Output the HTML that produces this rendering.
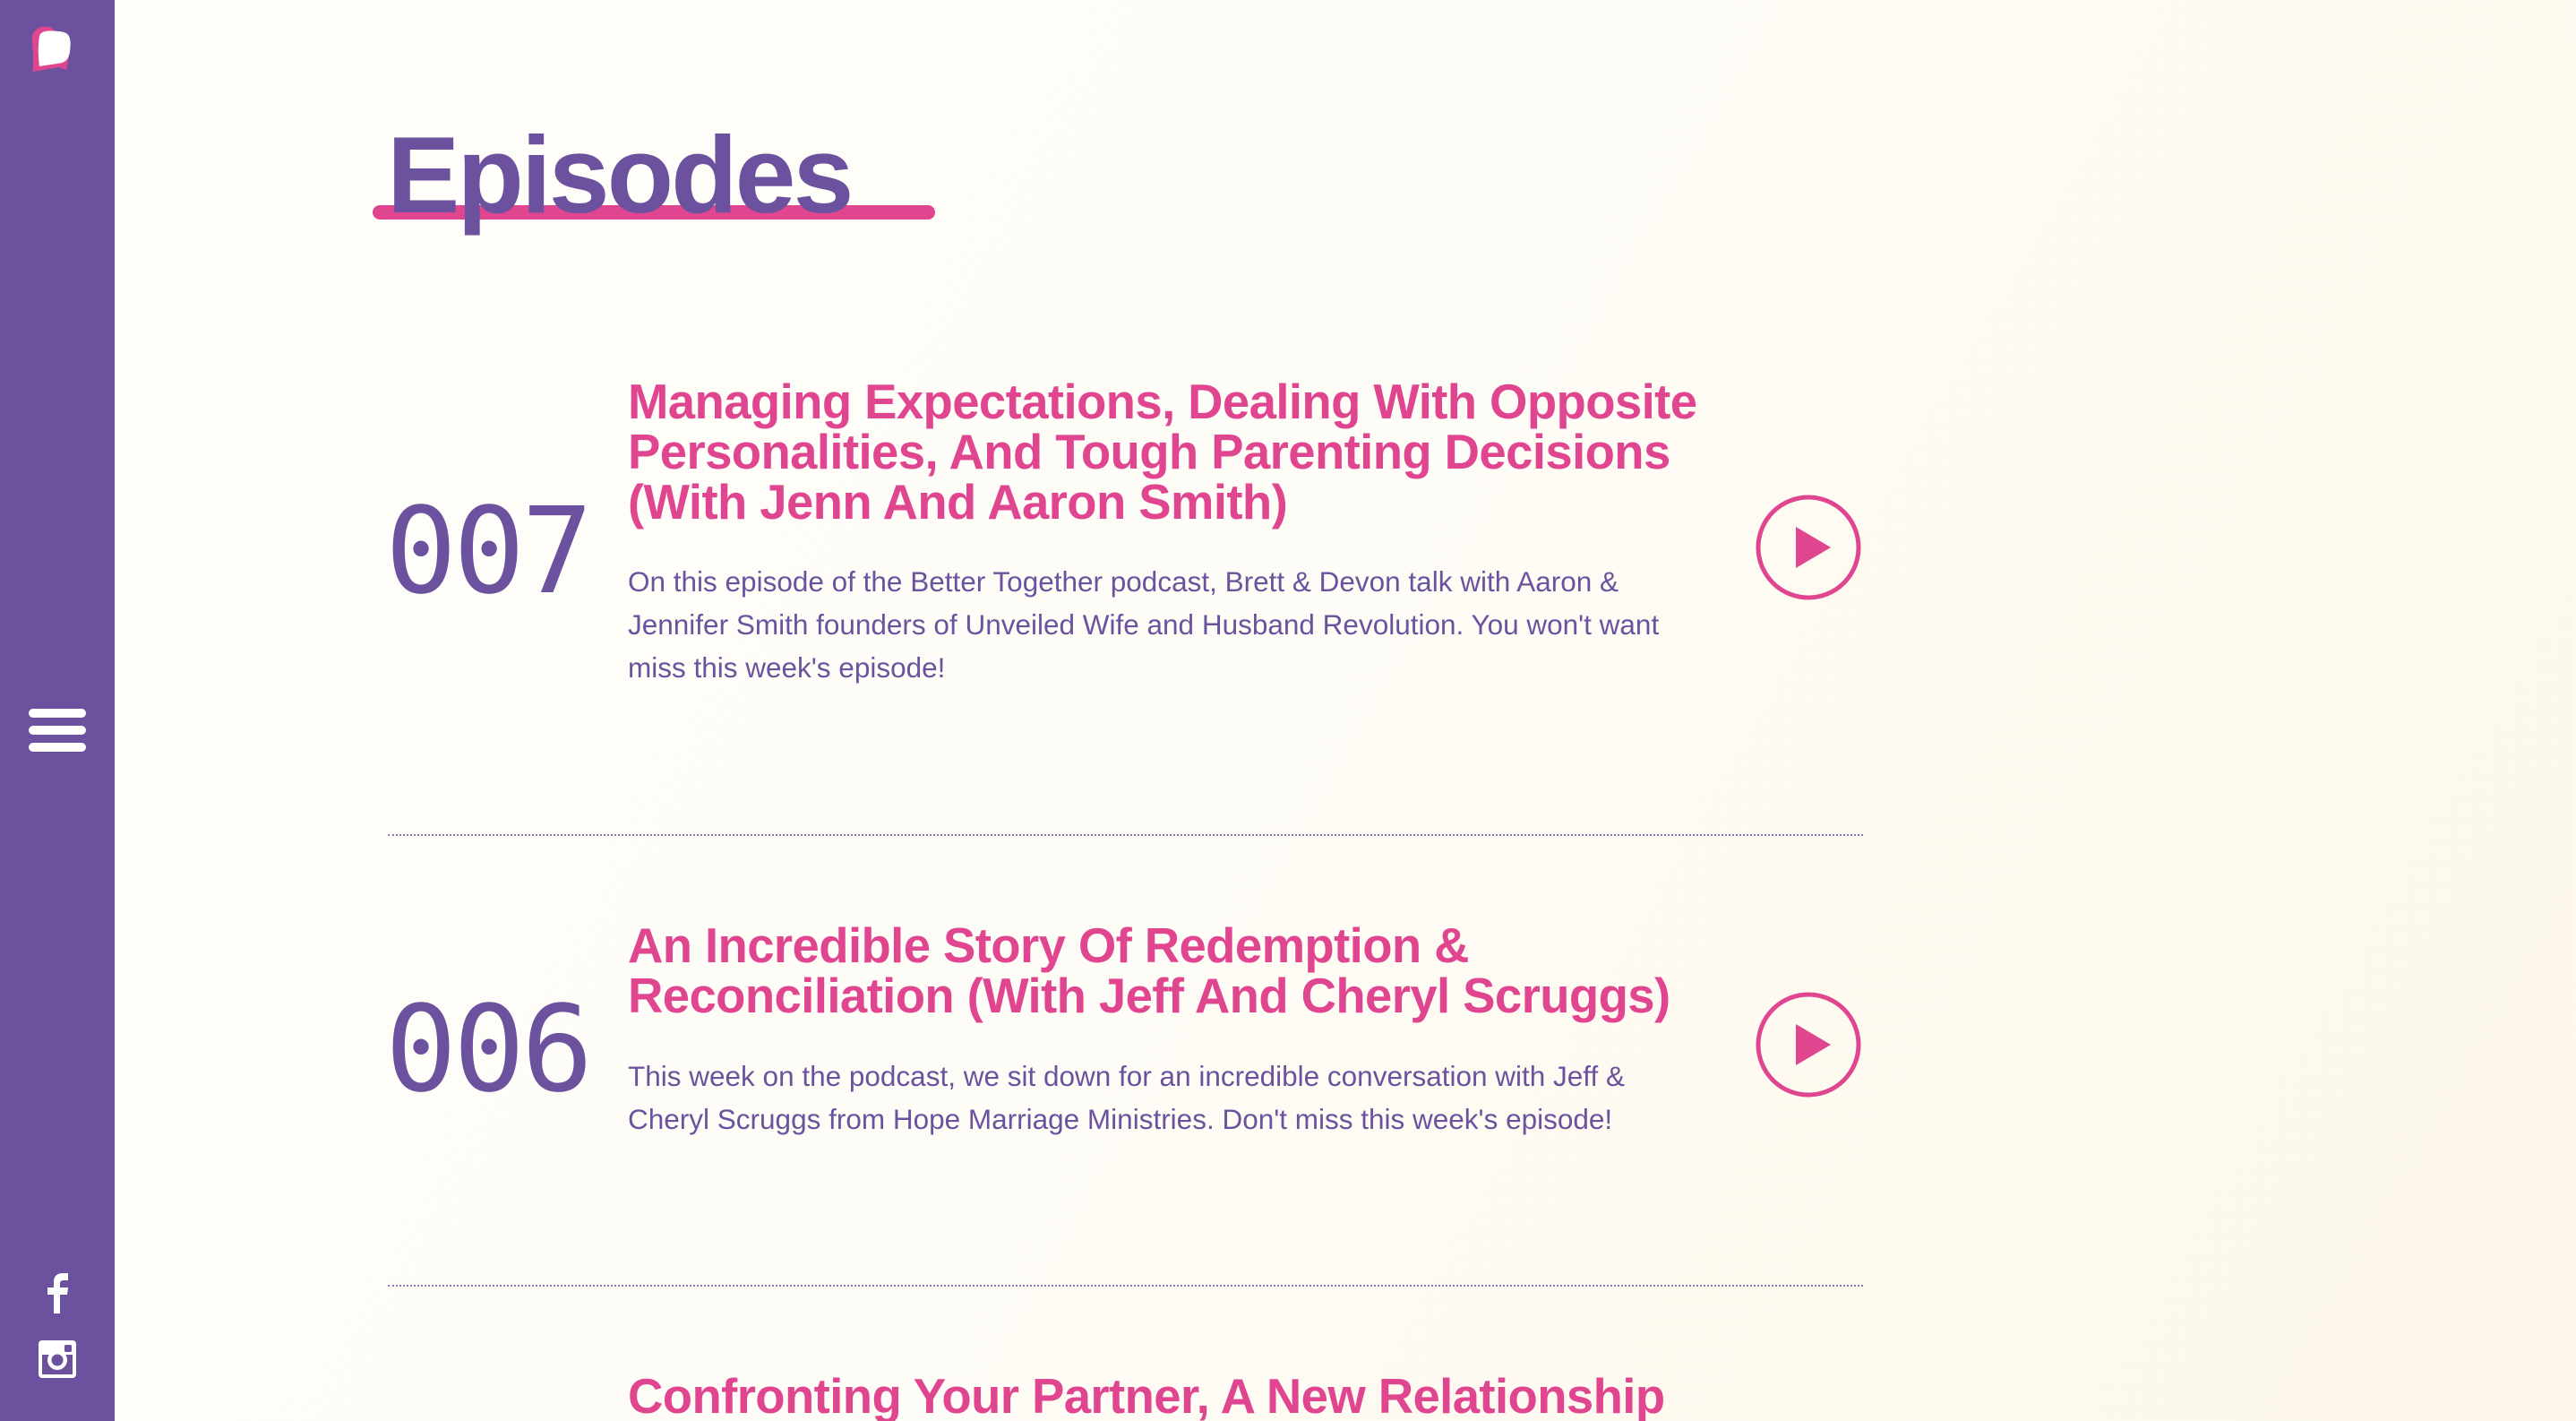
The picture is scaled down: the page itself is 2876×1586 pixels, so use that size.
<!DOCTYPE html>
<html><head><meta charset="utf-8"><style>
*{margin:0;padding:0;box-sizing:border-box}
html,body{width:2876px;height:1586px;overflow:hidden}
body{background:linear-gradient(120deg,#fffefb 0%,#fefcf6 50%,#fdf7e9 100%);font-family:"Liberation Sans",sans-serif;position:relative}
.side{position:absolute;left:0;top:0;width:128px;height:1586px;background:#6c529e}
.bar{position:absolute;left:32px;width:64px;height:10px;border-radius:5px;background:#fff}
h1{position:absolute;left:432px;top:125px;font-size:122px;font-weight:bold;color:#6c529e;letter-spacing:-3px;line-height:140px;z-index:2}
.ul{position:absolute;left:416px;top:229px;width:628px;height:16px;border-radius:8px;background:#e0468f;z-index:1}
.t{position:absolute;left:701px;font-size:54.5px;font-weight:bold;color:#e0468f;line-height:56px;white-space:nowrap;letter-spacing:-0.6px}
.d{position:absolute;left:701px;font-size:31.5px;color:#6c529e;line-height:48px;white-space:nowrap}
.n{position:absolute;left:430px;font-family:"DejaVu Sans Mono",monospace;font-size:133px;color:#6c529e;line-height:150px;letter-spacing:-4px}
.play{position:absolute;left:1960px;width:118px;height:118px}
.hr{position:absolute;left:433px;width:1647px;border-top:2px dotted #6c529e;opacity:.8}
</style></head><body>
<div class="side">
<svg style="position:absolute;left:30px;top:28px" width="68" height="56" viewBox="0 0 68 56">
<path d="M6 20 C4 6 14 0 24 2 C30 3 32 8 32 8 L40 10 C48 12 48 30 46 40 L44 50 L36 47 L6 52 C8 44 7 32 6 20Z" fill="#e0468f"/>
<path d="M14 12 C16 6 24 6 36 7 C48 8 50 14 48 30 C46 40 42 42 34 43 L14 46 C13 38 12 24 14 12Z" fill="#fff"/>
</svg>
<div class="bar" style="top:791px"></div>
<div class="bar" style="top:810px"></div>
<div class="bar" style="top:829px"></div>
<svg style="position:absolute;left:52px;top:1421px" width="24" height="45" viewBox="0 0 24 45">
<path d="M8 45 V24 H1 V16 H8 V10 C8 3 12 0 18 0 H24 V8 H19 C16 8 15 9 15 12 V16 H24 L23 24 H15 V45Z" fill="#fff"/>
</svg>
<svg style="position:absolute;left:43px;top:1496px" width="42" height="42" viewBox="0 0 42 42">
<rect x="0" y="0" width="42" height="42" rx="4" fill="#fff"/>
<rect x="4" y="16" width="34" height="22" fill="#6c529e"/>
<rect x="4" y="4" width="34" height="11" fill="#fff"/>
<circle cx="21" cy="22" r="11" fill="#fff"/>
<circle cx="21" cy="22" r="6.5" fill="#6c529e"/>
<rect x="29" y="5" width="8" height="8" rx="1.5" fill="#6c529e"/>
</svg>
</div>

<div class="ul"></div>
<h1>Episodes</h1>

<div class="t" style="top:421px">Managing Expectations, Dealing With Opposite<br>Personalities, And Tough Parenting Decisions<br>(With Jenn And Aaron Smith)</div>
<div class="n" style="top:541px">007</div>
<div class="d" style="top:625px">On this episode of the Better Together podcast, Brett &amp; Devon talk with Aaron &amp;<br>Jennifer Smith founders of Unveiled Wife and Husband Revolution. You won't want<br>miss this week's episode!</div>
<svg class="play" style="top:552px" viewBox="0 0 118 118"><circle cx="59" cy="59" r="56" fill="none" stroke="#e0468f" stroke-width="5"/><path d="M45 36 L84 59 L45 82Z" fill="#e0468f"/></svg>
<div class="hr" style="top:931px"></div>

<div class="t" style="top:1028px">An Incredible Story Of Redemption &amp;<br>Reconciliation (With Jeff And Cheryl Scruggs)</div>
<div class="n" style="top:1097px">006</div>
<div class="d" style="top:1177px">This week on the podcast, we sit down for an incredible conversation with Jeff &amp;<br>Cheryl Scruggs from Hope Marriage Ministries. Don't miss this week's episode!</div>
<svg class="play" style="top:1107px" viewBox="0 0 118 118"><circle cx="59" cy="59" r="56" fill="none" stroke="#e0468f" stroke-width="5"/><path d="M45 36 L84 59 L45 82Z" fill="#e0468f"/></svg>
<div class="hr" style="top:1434px"></div>

<div class="t" style="top:1531px">Confronting Your Partner, A New Relationship</div>
</body></html>
